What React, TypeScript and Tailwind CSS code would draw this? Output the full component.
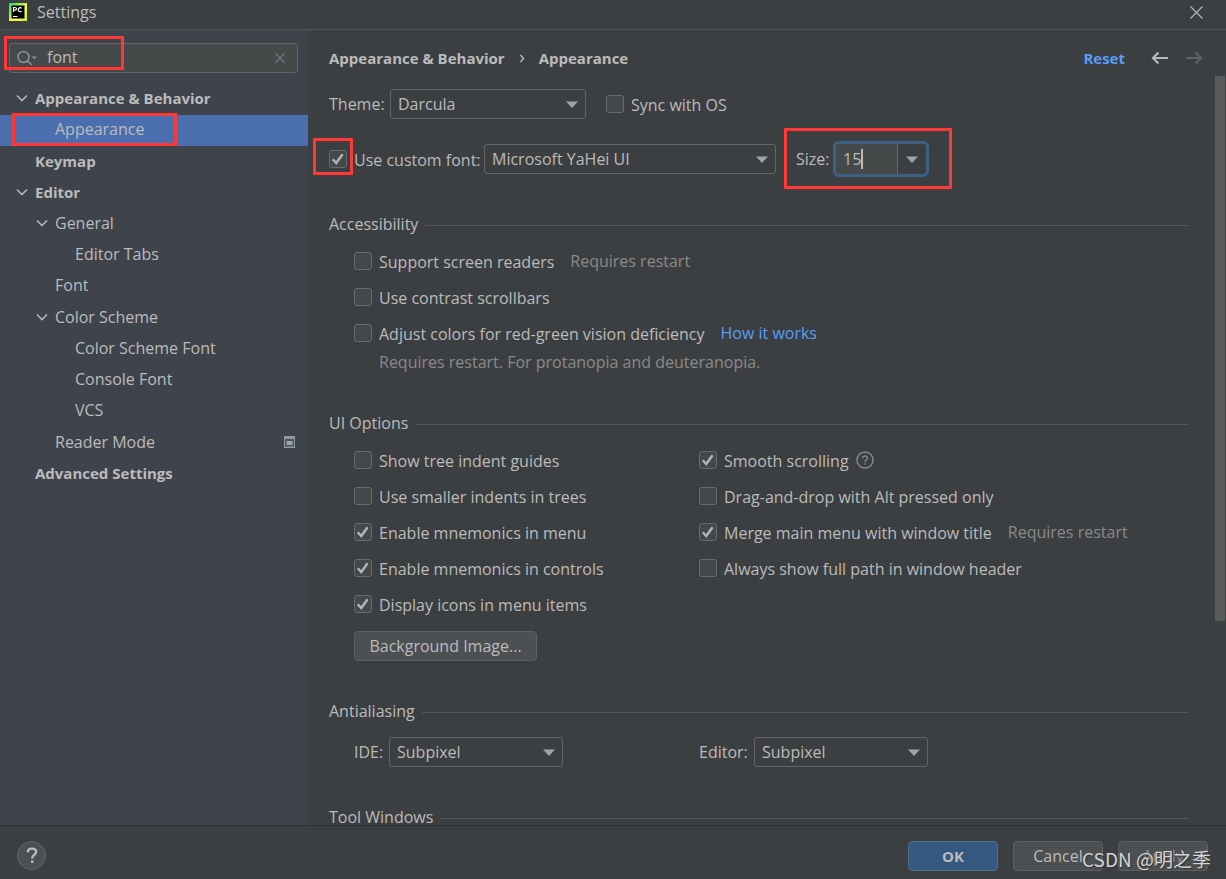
import { useState, type ReactNode } from "react";

const MARK = "pointer-events-none absolute z-10 border-[3px] border-[#ff3835]";

function Chevron() {
  return (
    <svg width="12" height="12" viewBox="0 0 12 12" fill="none" stroke="#b4b6b8" strokeWidth="1.6" aria-hidden="true">
      <path d="M1 3.5 6 8.5 11 3.5" />
    </svg>
  );
}

function Triangle() {
  return (
    <svg width="12" height="7" viewBox="0 0 12 7" fill="#a0a3a5" aria-hidden="true">
      <path d="M0 0.5h12L6 7z" />
    </svg>
  );
}

function CheckBox({ id, label, on = false }: { id: string; label: string; on?: boolean }) {
  const [checked, setChecked] = useState(on);
  return (
    <div className="flex items-center gap-[7px]">
      <span className="grid shrink-0">
        <input
          id={id}
          type="checkbox"
          checked={checked}
          onChange={(e) => setChecked(e.target.checked)}
          className="col-start-1 row-start-1 size-[18px] appearance-none rounded-[3px] border border-[#6b6b6b] bg-[#43494a]"
        />
        {checked && (
          <svg
            className="pointer-events-none col-start-1 row-start-1"
            width="18"
            height="18"
            viewBox="0 0 18 18"
            fill="none"
            stroke="#b4b6b6"
            strokeWidth="2.4"
            aria-hidden="true"
          >
            <path d="M3.800 9.200 7.200 13 13.600 4.200" />
          </svg>
        )}
      </span>
      <label htmlFor={id} className="whitespace-nowrap pt-[2px]">
        {label}
      </label>
    </div>
  );
}

function Combo({ id, options, width }: { id: string; options: string[]; width: string }) {
  return (
    <span className={`grid items-center ${width}`}>
      <select
        id={id}
        className="col-start-1 row-start-1 h-[30px] w-full appearance-none rounded-[3px] border border-[#646464] bg-[#3c3f41] pb-px pl-[7px] pr-8 outline-none"
      >
        {options.map((o) => (
          <option key={o}>{o}</option>
        ))}
      </select>
      <span className="pointer-events-none col-start-1 row-start-1 mr-2 justify-self-end">
        <Triangle />
      </span>
    </span>
  );
}

function Section({ title, children }: { title: string; children?: ReactNode }) {
  return (
    <section className="mt-10">
      <div className="flex h-5 items-center gap-[7px]">
        <h2 className="whitespace-nowrap">{title}</h2>
        <div className="mt-[2px] h-px flex-1 bg-[#555657]" />
      </div>
      <div className="pl-[25px]">{children}</div>
    </section>
  );
}

type Node = { label: string; pad: string; bold?: boolean; open?: boolean; selected?: boolean; project?: boolean };

const TREE: Node[] = [
  { label: "Appearance & Behavior", pad: "pl-4", bold: true, open: true },
  { label: "Appearance", pad: "pl-9", selected: true },
  { label: "Keymap", pad: "pl-4", bold: true },
  { label: "Editor", pad: "pl-4", bold: true, open: true },
  { label: "General", pad: "pl-9", open: true },
  { label: "Editor Tabs", pad: "pl-14" },
  { label: "Font", pad: "pl-9" },
  { label: "Color Scheme", pad: "pl-9", open: true },
  { label: "Color Scheme Font", pad: "pl-14" },
  { label: "Console Font", pad: "pl-14" },
  { label: "VCS", pad: "pl-14" },
  { label: "Reader Mode", pad: "pl-9", project: true },
  { label: "Advanced Settings", pad: "pl-4", bold: true },
];

function Sidebar() {
  const [query, setQuery] = useState("font");
  return (
    <aside className="w-[308px] shrink-0 bg-[#3f434c] pt-[13px]">
      <div className="relative ml-[9px] mr-[10px] flex h-[30px] items-center rounded-[3px] border border-[#646464] bg-[#45494a] pl-[7px] pr-[11px]">
        <svg width="21" height="18" viewBox="0 0 21 18" fill="none" stroke="#8b9297" strokeWidth="1.5" aria-hidden="true">
          <circle cx="6.5" cy="8" r="5.5" />
          <path d="M10.5 12 15 16" />
          <path d="M14.500 7.500h5.500l-2.750 3z" fill="#8b9297" stroke="none" />
        </svg>
        <input
          aria-label="Search settings"
          value={query}
          onChange={(e) => setQuery(e.target.value)}
          className="ml-[9px] min-w-0 flex-1 bg-transparent pb-[2px] outline-none"
        />
        <button aria-label="Clear search" onClick={() => setQuery("")}>
          <svg width="12" height="12" viewBox="0 0 12 12" stroke="#737a7e" strokeWidth="1.2" aria-hidden="true">
            <path d="M1.500 1.500l9 9M10.500 1.500l-9 9" />
          </svg>
        </button>
        <div className={`${MARK} -left-[6px] -top-[8px] h-[34px] w-[120px]`} />
      </div>
      <ul className="mt-[11px] grid h-[406px] auto-rows-fr">
        {TREE.map((n) => (
          <li key={n.label} className={`relative ${n.selected ? "bg-[#4b6eaf]" : ""}`}>
            <button
              className={`flex h-full w-full items-center gap-[7px] pb-[3px] pr-3 text-left ${n.pad} ${n.bold ? "text-[15px] font-bold" : ""}`}
            >
              <span className="w-3 shrink-0">{n.open && <Chevron />}</span>
              <span className="flex-1 whitespace-nowrap">{n.label}</span>
              {n.project && (
                <svg width="13" height="12" viewBox="0 0 13 12" aria-hidden="true">
                  <path d="M1 0h11v12H1z" fill="#8d979e" />
                  <path d="M2 3h9v7.500H2z" fill="#4b535a" />
                  <path d="M3.500 5h6v4h-6z" fill="#9ba4aa" />
                </svg>
              )}
            </button>
            {n.selected && <div className={`${MARK} -top-[2px] left-3 h-[33px] w-[165px]`} />}
          </li>
        ))}
      </ul>
    </aside>
  );
}

function Hint({ children }: { children: ReactNode }) {
  return <span className="whitespace-nowrap text-[#8a8a8a]">{children}</span>;
}

const ROW = "flex h-9 items-center";
const BUTTON = "h-[30px] rounded-[4px] border border-[#5e6060] bg-[#4c5052]";

function Content() {
  const [size, setSize] = useState("15");
  return (
    <div className="min-h-0 flex-1 overflow-hidden pl-[21px] pr-[26px] pt-[3px]">
      <div className="flex h-[30px] items-center">
        <label htmlFor="theme" className="w-[61px]">Theme:</label>
        <Combo id="theme" options={["Darcula", "IntelliJ Light", "High contrast"]} width="mr-5 w-[196px]" />
        <CheckBox id="sync" label="Sync with OS" />
      </div>

      <div className="mt-[25px] flex h-[30px] items-center">
        <div className="relative w-[155px]">
          <CheckBox id="custom-font" label="Use custom font:" on />
          <div className={`${MARK} -left-4 -top-[10px] h-[37px] w-10`} />
        </div>
        <Combo id="font-family" options={["Microsoft YaHei UI", "Inter", "Segoe UI"]} width="mr-5 w-[292px]" />
        <div className="relative flex items-center">
          <label htmlFor="font-size" className="w-10">Size:</label>
          <div className="flex h-[30px] w-[90px] rounded-[3px] bg-[#45494a] outline-[3px] outline-[#3d6185]">
            <div className="flex flex-1 items-center pl-[7px]">
              <input
                id="font-size"
                value={size}
                onChange={(e) => setSize(e.target.value)}
                className="w-[18px] bg-transparent outline-none"
              />
              <span className="h-5 w-[2px] bg-[#bbbbbb]" />
            </div>
            <button
              aria-label="Choose size"
              className="flex w-[29px] items-center justify-center rounded-r-[3px] border-l border-[#646464] bg-[#3c3f41]"
            >
              <Triangle />
            </button>
          </div>
          <div className={`${MARK} -left-3 -top-4 h-[61px] w-[168px]`} />
        </div>
      </div>

      <Section title="Accessibility">
        <div className="mt-[9px]">
          <div className={`${ROW} gap-4`}>
            <CheckBox id="readers" label="Support screen readers" />
            <Hint>Requires restart</Hint>
          </div>
          <div className={ROW}>
            <CheckBox id="contrast" label="Use contrast scrollbars" />
          </div>
          <div className={`${ROW} gap-4`}>
            <CheckBox id="deficiency" label="Adjust colors for red-green vision deficiency" />
            <a href="#how" className="whitespace-nowrap text-[#589df6]">How it works</a>
          </div>
          <p className="flex h-[22px] items-center pl-[25px]">
            <Hint>Requires restart. For protanopia and deuteranopia.</Hint>
          </p>
        </div>
      </Section>

      <Section title="UI Options">
        <div className="mt-[9px] grid grid-cols-[345px_1fr]">
          <div>
            <div className={ROW}><CheckBox id="guides" label="Show tree indent guides" /></div>
            <div className={ROW}><CheckBox id="indents" label="Use smaller indents in trees" /></div>
            <div className={ROW}><CheckBox id="mn-menu" label="Enable mnemonics in menu" on /></div>
            <div className={ROW}><CheckBox id="mn-controls" label="Enable mnemonics in controls" on /></div>
            <div className={ROW}><CheckBox id="icons" label="Display icons in menu items" on /></div>
          </div>
          <div>
            <div className={`${ROW} gap-[7px]`}>
              <CheckBox id="smooth" label="Smooth scrolling" on />
              <svg width="18" height="18" viewBox="0 0 18 18" fill="none" stroke="#838b90" strokeWidth="1.4" aria-hidden="true">
                <circle cx="9" cy="9" r="8" />
                <path d="M6.600 7.200a2.400 2.200 0 1 1 3.700 1.800C9.400 9.600 9 9.900 9 11" />
                <path d="M9 12.200v1.600" />
              </svg>
            </div>
            <div className={ROW}><CheckBox id="dnd" label="Drag-and-drop with Alt pressed only" /></div>
            <div className={`${ROW} gap-4`}>
              <CheckBox id="merge" label="Merge main menu with window title" on />
              <Hint>Requires restart</Hint>
            </div>
            <div className={ROW}><CheckBox id="path" label="Always show full path in window header" /></div>
          </div>
        </div>
        <button className={`${BUTTON} mt-[9px] w-[183px]`}>Background Image...</button>
      </Section>

      <Section title="Antialiasing">
        <div className="mt-4 grid grid-cols-[345px_1fr]">
          <div className="flex items-center">
            <label htmlFor="aa-ide" className="w-[35px]">IDE:</label>
            <Combo id="aa-ide" options={["Subpixel", "Greyscale", "No antialiasing"]} width="w-[174px]" />
          </div>
          <div className="flex items-center">
            <label htmlFor="aa-editor" className="w-[55px]">Editor:</label>
            <Combo id="aa-editor" options={["Subpixel", "Greyscale", "No antialiasing"]} width="w-[174px]" />
          </div>
        </div>
      </Section>

      <Section title="Tool Windows" />
    </div>
  );
}

export default function App() {
  return (
    <div className="relative flex h-screen flex-col overflow-hidden bg-[#3c3f41] font-['Open_Sans','Noto_Sans_CJK_SC',sans-serif] text-[16px] leading-5 text-[#bbbbbb]">
      <header className="flex h-[30px] shrink-0 items-center border-b border-[#515456] pb-[5px] pl-[9px] pr-[23px]">
        <svg width="18" height="18" viewBox="0 0 18 18" aria-hidden="true">
          <defs>
            <linearGradient id="logo" x1="0" y1="0" x2="1" y2="1">
              <stop offset="0" stopColor="#21d789" />
              <stop offset="0.350" stopColor="#a8ea4a" />
              <stop offset="0.600" stopColor="#fcf84a" />
              <stop offset="1" stopColor="#c8ee45" />
            </linearGradient>
          </defs>
          <path d="M0 0h18v18H0z" fill="url(#logo)" />
          <path d="M2.500 2.500h13v13h-13z" fill="#000" />
          <path d="M4.500 9V4.500h1.600a1.300 1.300 0 0 1 0 2.700H4.500M12.700 5.300a2 2 0 1 0 0 2.800" fill="none" stroke="#fff" strokeWidth="1.200" />
          <path d="M4 13h4.500v1H4z" fill="#fff" />
        </svg>
        <h1 className="ml-[10px] flex-1">Settings</h1>
        <button aria-label="Close">
          <svg width="13" height="13" viewBox="0 0 13 13" stroke="#b4b6b8" strokeWidth="1.200" aria-hidden="true">
            <path d="M0.500 0.500l12 12M12.500 0.500l-12 12" />
          </svg>
        </button>
      </header>

      <div className="flex min-h-0 flex-1">
        <Sidebar />
        <main className="flex min-w-0 flex-1">
          <div className="flex min-w-0 flex-1 flex-col">
            <div className="flex h-14 shrink-0 items-center pl-[21px] pr-3 text-[15px] font-bold">
              <span>Appearance &amp; Behavior</span>
              <svg className="mx-[14px]" width="6" height="9" viewBox="0 0 6 9" fill="none" stroke="#bbbbbb" strokeWidth="1.400" aria-hidden="true">
                <path d="M1.500 1 4.500 4.500 1.500 8" />
              </svg>
              <span className="flex-1">Appearance</span>
              <button className="mr-[26px] font-bold text-[#589df6]">Reset</button>
              <button aria-label="Back" className="mr-4">
                <svg width="18" height="14" viewBox="0 0 18 14" fill="none" stroke="#b4b6b8" strokeWidth="2.200" aria-hidden="true">
                  <path d="M17 7H2M7.500 1.500 2 7l5.500 5.500" />
                </svg>
              </button>
              <button aria-label="Forward" disabled>
                <svg width="18" height="14" viewBox="0 0 18 14" fill="none" stroke="#606365" strokeWidth="2.200" aria-hidden="true">
                  <path d="M1 7h15M10.500 1.500 16 7l-5.500 5.500" />
                </svg>
              </button>
            </div>
            <Content />
          </div>
          <div className="mr-px w-[10px] shrink-0 pt-[46px]">
            <div className="h-[545px] bg-[#595b5d]" />
          </div>
        </main>
      </div>

      <footer className="flex h-[54px] shrink-0 items-center gap-[15px] border-t border-[#2f3234] pl-[17px] pr-[18px] pt-[6px]">
        <button
          aria-label="Help"
          className="flex size-[29px] items-center justify-center rounded-full border border-[#636667] bg-[#4c5052]"
        >
          <svg width="12" height="17" viewBox="0 0 12 17" fill="none" stroke="#bbbbbb" strokeWidth="2.400" aria-hidden="true">
            <path d="M1.800 5.200C1.800 2.800 3.600 1.600 6 1.600s4.200 1.300 4.200 3.400C10.200 7.700 6.200 7.700 6.200 11.400" />
            <path d="M6.200 13.400v2.600" />
          </svg>
        </button>
        <span className="flex-1" />
        <button className="h-[30px] w-[90px] rounded-[4px] border border-[#4c708c] bg-[#365880] text-[15px] font-bold">OK</button>
        <button className={`${BUTTON} w-[90px]`}>Cancel</button>
        <button className={`${BUTTON} w-[90px] text-[#8a8a8a]`}>Apply</button>
      </footer>

      <div className="pointer-events-none absolute bottom-2 right-[15px] font-['Noto_Sans_CJK_SC',sans-serif] text-[19px] leading-6 text-[#d4d4d4] [text-shadow:1px_1px_1px_#333333]">
        CSDN @明之季
      </div>
    </div>
  );
}
